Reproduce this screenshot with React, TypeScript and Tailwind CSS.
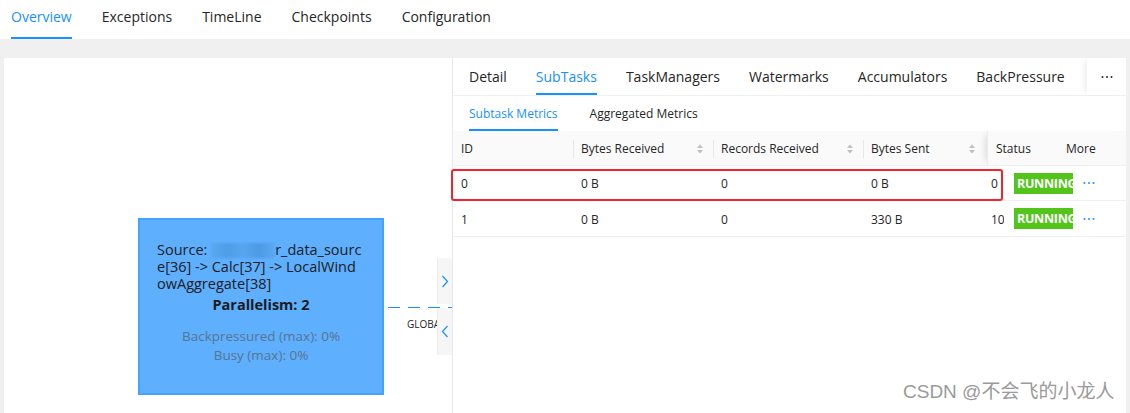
import { ReactNode } from "react";

const topTabs = ["Overview", "Exceptions", "TimeLine", "Checkpoints", "Configuration"];
const detailTabs = ["Detail", "SubTasks", "TaskManagers", "Watermarks", "Accumulators", "BackPressure"];

type Row = { id: string; bytesIn: string; recordsIn: string; bytesOut: string; recordsOut: string };

const rows: Row[] = [
  { id: "0", bytesIn: "0 B", recordsIn: "0", bytesOut: "0 B", recordsOut: "0" },
  { id: "1", bytesIn: "0 B", recordsIn: "0", bytesOut: "330 B", recordsOut: "10" },
];

function SortIcon() {
  return (
    <svg width="8" height="12" viewBox="0 0 8 12" className="shrink-0">
      <path d="M4 1.5 L7 5 L1 5 Z" fill="#bfbfbf" />
      <path d="M1 7 L7 7 L4 10.5 Z" fill="#bfbfbf" />
    </svg>
  );
}

function Dots({ color }: { color: string }) {
  return (
    <svg width="12" height="4" viewBox="0 0 12 4">
      <circle cx="1.5" cy="2" r="1" fill={color} />
      <circle cx="6" cy="2" r="1" fill={color} />
      <circle cx="10.5" cy="2" r="1" fill={color} />
    </svg>
  );
}

function HeaderCell({ label, width, sortable }: { label: string; width: string; sortable?: boolean }) {
  return (
    <div className={`flex items-center h-full shrink-0 ${width}`}>
      <div className="w-px h-[18px] bg-[#e8e8e8]" />
      <span className="ml-[7px] flex-1">{label}</span>
      {sortable && (
        <span className="mr-[9px]">
          <SortIcon />
        </span>
      )}
    </div>
  );
}

function Cell({ children, width }: { children: ReactNode; width: string }) {
  return <div className={`flex items-center h-full shrink-0 pl-2 pt-[2px] ${width}`}>{children}</div>;
}

function Chevron({ dir }: { dir: "left" | "right" }) {
  return (
    <svg width="8" height="13" viewBox="0 0 8 13">
      <path
        d={dir === "right" ? "M1.5 1 L6.5 6.5 L1.5 12" : "M6.5 1 L1.5 6.5 L6.5 12"}
        fill="none"
        stroke="#1890ff"
        strokeWidth="1.2"
      />
    </svg>
  );
}

export default function App() {
  return (
    <div className="relative w-[1130px] h-[413px] overflow-hidden bg-[#f0f0f0] text-[#262626] font-['Open_Sans','Noto_Sans_CJK_SC',sans-serif]">
      {/* top navigation */}
      <nav className="flex h-[39px] bg-white pl-[11px] gap-[30px] text-[14px]">
        {topTabs.map((t, i) => (
          <div
            key={t}
            className={`flex items-center h-full pb-[4px] border-b-2 ${
              i === 0 ? "border-[#1890ff] text-[#1890ff]" : "border-transparent"
            }`}
          >
            {t}
          </div>
        ))}
      </nav>

      <div className="flex h-[374px] pt-[19px] px-[4px]">
        {/* job graph */}
        <section className="relative w-[449px] shrink-0 bg-white border-r border-[#e8e8e8]">
          <div className="absolute left-[134px] top-[160px] w-[246px] h-[177px] bg-[#5eaffe] border-2 border-[#43a1ff] pt-[21px] px-[17px] text-[14.5px]">
            <div className="leading-[17px] text-[#1c1c1c]">
              <div className="whitespace-nowrap">
                Source:{" "}
                <span className="inline-block align-middle w-[64px] h-[15px] -mt-[2px] blur-[1px] bg-[linear-gradient(90deg,#5aa8f2_0%,#4e9de8_25%,#58a6ef_50%,#4b9ae4_75%,#5aa9f3_100%)]" />
                r_data_sourc
              </div>
              <div className="whitespace-nowrap">e[36] -&gt; Calc[37] -&gt; LocalWind</div>
              <div className="whitespace-nowrap">owAggregate[38]</div>
            </div>
            <div className="mt-[4px] text-center font-bold leading-[18px] text-[#1c1c1c]">Parallelism: 2</div>
            <div className="mt-[13px] text-center text-[13.5px] leading-[19px] text-[#587590]">
              <div>Backpressured (max): 0%</div>
              <div>Busy (max): 0%</div>
            </div>
          </div>

          <svg className="absolute left-[380px] top-[248px]" width="68" height="3">
            <line x1="4" y1="1.5" x2="68" y2="1.5" stroke="#1890ff" strokeWidth="1.2" strokeDasharray="12 8" />
          </svg>
          <div className="absolute left-[403px] top-[260px] text-[10px] leading-[12px] text-[#222]">GLOBA</div>

          <div className="absolute right-0 top-[200px] w-[15px] h-[46px] bg-[#f6f6f6] border-l border-[#ececec] flex items-center justify-center">
            <Chevron dir="right" />
          </div>
          <div className="absolute right-0 top-[250px] w-[15px] h-[47px] bg-[#f6f6f6] border-l border-[#ececec] flex items-center justify-center">
            <Chevron dir="left" />
          </div>
        </section>

        {/* vertex detail */}
        <section className="relative w-[673px] min-w-0 shrink-0 bg-white flex flex-col">
          <div className="relative flex h-[38px] border-b border-[#f0f0f0] pl-4 gap-[29px] text-[14px]">
            {detailTabs.map((t, i) => (
              <div
                key={t}
                className={`flex items-center h-full border-b-2 -mb-px pt-[1px] ${
                  i === 1 ? "border-[#1890ff] text-[#1890ff]" : "border-transparent"
                }`}
              >
                {t}
              </div>
            ))}
            <div className="absolute right-0 top-0 h-[37px] w-[39px] bg-white flex items-center justify-center shadow-[-5px_0_6px_-3px_rgba(0,0,0,0.08)]">
              <Dots color="#262626" />
            </div>
          </div>

          <div className="flex h-[35px] pl-4 gap-8 text-[12px]">
            <div className="flex items-center h-full border-b-2 border-[#1890ff] text-[#1890ff] pt-[2px]">
              Subtask Metrics
            </div>
            <div className="flex items-center h-full border-b-2 border-transparent pt-[2px]">Aggregated Metrics</div>
          </div>

          <div className="relative text-[12px]">
            {/* header */}
            <div className="flex h-[35px] bg-[#fafafa] border-b border-[#f0f0f0]">
              <div className="flex flex-1 min-w-0 overflow-hidden h-full pt-[2px]">
                <div className="flex items-center h-full w-[120px] shrink-0 pl-2">ID</div>
                <HeaderCell label="Bytes Received" width="w-[140px]" sortable />
                <HeaderCell label="Records Received" width="w-[150px]" sortable />
                <HeaderCell label="Bytes Sent" width="w-[122px]" sortable />
              </div>
              <div className="flex h-full w-[139px] shrink-0 bg-[#fafafa] border-l border-[#ececec] shadow-[-6px_0_6px_-4px_rgba(0,0,0,0.12)] pt-[2px]">
                <div className="flex items-center w-[70px] pl-2">Status</div>
                <div className="flex items-center pl-2">More</div>
              </div>
            </div>

            {/* body */}
            {rows.map((r, i) => (
              <div key={r.id} className={`flex border-b border-[#f0f0f0] ${i === 0 ? "h-[35px]" : "h-[36px]"}`}>
                <div className="flex flex-1 min-w-0 overflow-hidden h-full">
                  <Cell width="w-[120px]">{r.id}</Cell>
                  <Cell width="w-[140px]">{r.bytesIn}</Cell>
                  <Cell width="w-[150px]">{r.recordsIn}</Cell>
                  <Cell width="w-[120px]">{r.bytesOut}</Cell>
                  <Cell width="w-[120px]">{r.recordsOut}</Cell>
                </div>
                <div className="flex items-center h-full w-[122px] shrink-0 bg-white pl-[10px]">
                  <div className="w-[59px] overflow-hidden">
                    <span className="inline-block bg-[#52c41a] text-white font-bold text-[12.5px] leading-[21px] pl-[3px] pr-[6px] tracking-[-0.3px] whitespace-nowrap">
                      RUNNING
                    </span>
                  </div>
                  <span className="ml-[10px] flex items-center">
                    <Dots color="#1890ff" />
                  </span>
                </div>
              </div>
            ))}

            {/* highlight annotation */}
            <div className="absolute left-[-2px] top-[38px] w-[552px] h-[32px] border-2 border-[#f5222d] rounded-[3px]" />
          </div>
        </section>
      </div>

      <div className="absolute left-[903px] top-[381px] text-[19px] leading-[22px] text-[#9a9a9a] font-['Liberation_Sans','Noto_Sans_CJK_SC',sans-serif] [text-shadow:0_0_2px_#fff]">
        CSDN @不会飞的小龙人
      </div>
    </div>
  );
}
